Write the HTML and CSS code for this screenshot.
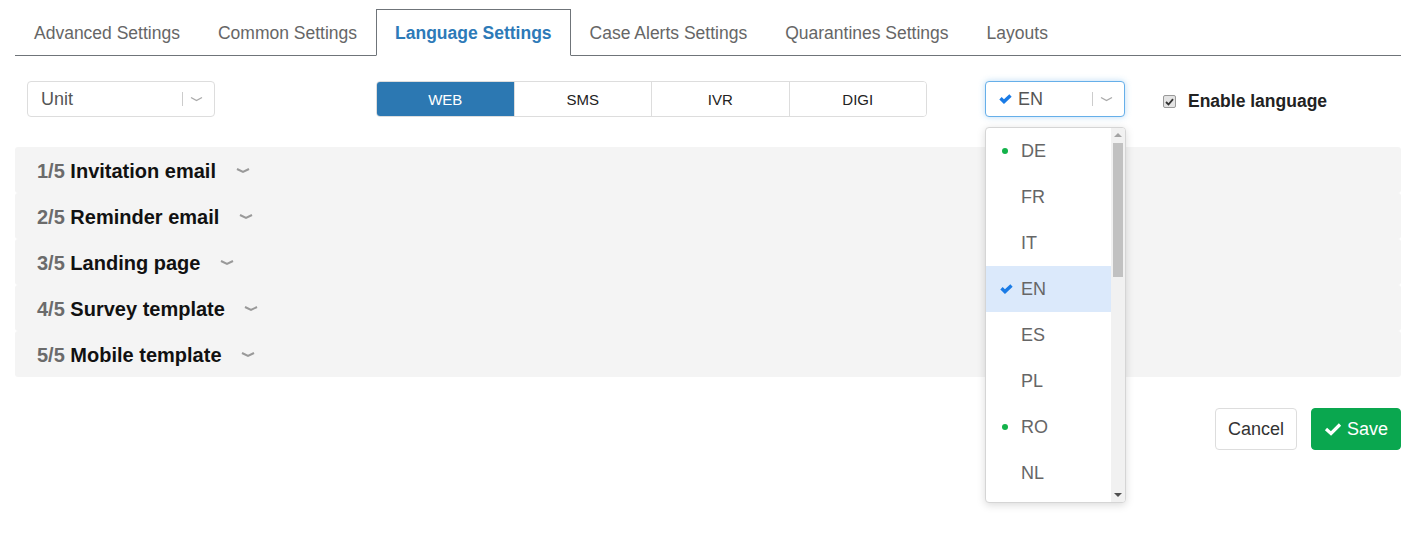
FILE: index.html
```html
<!DOCTYPE html>
<html lang="en">
<head>
    <meta charset="UTF-8">
    <title>Language Settings</title>
    <link rel="stylesheet" href="styles.css">
</head>
<body>
    <div class="page">
        <!-- Tabs -->
        <ul class="tabs">
            <li class="tab">Advanced Settings</li>
            <li class="tab">Common Settings</li>
            <li class="tab active">Language Settings</li>
            <li class="tab">Case Alerts Settings</li>
            <li class="tab">Quarantines Settings</li>
            <li class="tab">Layouts</li>
        </ul>

        <!-- Toolbar -->
        <div class="toolbar">
            <div class="select unit-select">
                <span class="select-value">Unit</span>
                <span class="select-sep"></span>
                <svg class="chev" width="13" height="8" viewBox="0 0 13 8"><path d="M1 2.5 L6.5 5.5 L12 2.5" fill="none" stroke="#aaa" stroke-width="1.4"/></svg>
            </div>

            <div class="channels">
                <button class="channel active">WEB</button>
                <button class="channel">SMS</button>
                <button class="channel">IVR</button>
                <button class="channel">DIGI</button>
            </div>

            <div class="lang-wrap">
                <div class="select lang-select">
                    <svg class="tick" width="13" height="10" viewBox="0 0 13 10"><path d="M1.5 4.2 L5 7.6 L11.5 1.5" fill="none" stroke="#1a7be6" stroke-width="3.4"/></svg>
                    <span class="select-value">EN</span>
                    <span class="select-sep"></span>
                    <svg class="chev" width="13" height="8" viewBox="0 0 13 8"><path d="M1 2.5 L6.5 5.5 L12 2.5" fill="none" stroke="#aaa" stroke-width="1.4"/></svg>
                </div>

                <div class="lang-menu">
                    <ul class="lang-list">
                        <li><span class="dot"></span>DE</li>
                        <li>FR</li>
                        <li>IT</li>
                        <li class="selected"><svg class="tick" width="13" height="10" viewBox="0 0 13 10"><path d="M1.5 4.2 L5 7.6 L11.5 1.5" fill="none" stroke="#1a7be6" stroke-width="3.4"/></svg>EN</li>
                        <li>ES</li>
                        <li>PL</li>
                        <li><span class="dot"></span>RO</li>
                        <li>NL</li>
                    </ul>
                    <div class="scrollbar">
                        <span class="arrow up"></span>
                        <span class="thumb"></span>
                        <span class="arrow down"></span>
                    </div>
                </div>
            </div>

            <label class="enable">
                <span class="checkbox">
                    <svg width="9" height="8" viewBox="0 0 9 8"><path d="M1 4 L3.5 6.5 L8 1.2" fill="none" stroke="#333" stroke-width="1.8"/></svg>
                </span>
                Enable language
            </label>
        </div>

        <!-- Sections -->
        <div class="sections">
            <div class="section"><span class="num">1/5</span> Invitation email <svg class="chev" width="14" height="8" viewBox="0 0 14 8"><path d="M1 2 L7 5 L13 2" fill="none" stroke="#999" stroke-width="2"/></svg></div>
            <div class="section"><span class="num">2/5</span> Reminder email <svg class="chev" width="14" height="8" viewBox="0 0 14 8"><path d="M1 2 L7 5 L13 2" fill="none" stroke="#999" stroke-width="2"/></svg></div>
            <div class="section"><span class="num">3/5</span> Landing page <svg class="chev" width="14" height="8" viewBox="0 0 14 8"><path d="M1 2 L7 5 L13 2" fill="none" stroke="#999" stroke-width="2"/></svg></div>
            <div class="section"><span class="num">4/5</span> Survey template <svg class="chev" width="14" height="8" viewBox="0 0 14 8"><path d="M1 2 L7 5 L13 2" fill="none" stroke="#999" stroke-width="2"/></svg></div>
            <div class="section"><span class="num">5/5</span> Mobile template <svg class="chev" width="14" height="8" viewBox="0 0 14 8"><path d="M1 2 L7 5 L13 2" fill="none" stroke="#999" stroke-width="2"/></svg></div>
        </div>

        <!-- Footer -->
        <div class="actions">
            <button class="btn cancel">Cancel</button>
            <button class="btn save">
                <svg width="18" height="14" viewBox="0 0 18 14"><path d="M2 7 L7 11.5 L16 2.5" fill="none" stroke="#fff" stroke-width="3.2"/></svg>
                Save
            </button>
        </div>
    </div>
</body>
</html>
```

FILE: styles.css
```css
/* General */
html, body {
    height: 100%;
}

body {
    margin: 0;
    font-family: "Liberation Sans", Arial, sans-serif;
    background: #fff;
    color: #333;
}

.page {
    padding: 9px 20px 0 15px;
}

/* Tabs */
.tabs {
    display: flex;
    list-style: none;
    margin: 0;
    padding: 0;
    border-bottom: 1px solid #6f7479;
}

.tab {
    font-size: 17.5px;
    color: #666;
    padding: 13px 18px 12px 18px;
    border: 1px solid transparent;
    margin-bottom: -1px;
    line-height: 20px;
}

.tab.active {
    color: #2d7ab8;
    font-weight: bold;
    background: #fff;
    border-color: #6f7479;
    border-bottom-color: #fff;
}

/* Toolbar */
.toolbar {
    display: flex;
    align-items: flex-start;
    margin-top: 25px;
    padding-left: 12px;
    height: 66px;
}

.select {
    display: flex;
    align-items: center;
    height: 34px;
    border: 1px solid #ddd;
    border-radius: 4px;
    background: #fff;
}

.select-value {
    flex: 1;
    font-size: 18px;
    color: #555;
}

.select-sep {
    width: 1px;
    height: 14px;
    background: #ccc;
    margin-right: 7px;
}

.select .chev {
    margin-right: 11px;
}

.unit-select {
    width: 186px;
}

.unit-select .select-value {
    padding-left: 13px;
}

.channels {
    display: flex;
    margin-left: 161px;
    border: 1px solid #ddd;
    border-radius: 4px;
    width: 549px;
    height: 34px;
    overflow: hidden;
}

.channel {
    flex: 1;
    border: none;
    border-left: 1px solid #ddd;
    background: #fff;
    font-family: inherit;
    font-size: 15px;
    color: #222;
    padding: 0;
}

.channel:first-child {
    border-left: none;
}

.channel.active {
    background: #2c78b2;
    color: #fff;
}

/* Language picker */
.lang-wrap {
    position: relative;
    margin-left: 58px;
}

.lang-select {
    width: 138px;
    border-color: #66afe9;
    box-shadow: 0 0 6px rgba(102, 175, 233, 0.45);
}

.lang-select .tick {
    margin: 0 6px 0 13px;
}

.lang-menu {
    position: absolute;
    top: 46px;
    left: 0;
    width: 139px;
    height: 374px;
    background: #fff;
    border: 1px solid #d5d5d5;
    border-radius: 4px;
    box-shadow: 0 2px 8px rgba(0, 0, 0, 0.15);
    display: flex;
    overflow: hidden;
    z-index: 10;
}

.lang-list {
    list-style: none;
    margin: 0;
    padding: 0;
    flex: 1;
}

.lang-list li {
    display: flex;
    align-items: center;
    height: 46px;
    padding-left: 35px;
    font-size: 18px;
    color: #666;
    position: relative;
}

.lang-list li.selected {
    background: #dbe9fb;
}

.lang-list .tick {
    position: absolute;
    left: 14px;
}

.lang-list .dot {
    position: absolute;
    left: 16px;
    width: 6px;
    height: 6px;
    border-radius: 50%;
    background: #13b24a;
}

.scrollbar {
    width: 14px;
    background: #f1f1f1;
    display: flex;
    flex-direction: column;
    align-items: center;
}

.scrollbar .thumb {
    width: 10px;
    height: 134px;
    background: #c1c1c1;
    margin-top: 1px;
}

.scrollbar .arrow {
    width: 0;
    height: 0;
    border-left: 4px solid transparent;
    border-right: 4px solid transparent;
    margin: 5px 0;
}

.scrollbar .arrow.up {
    border-bottom: 4px solid #a3a3a3;
}

.scrollbar .arrow.down {
    border-top: 4px solid #505050;
    margin-top: auto;
}

/* Enable checkbox */
.enable {
    display: flex;
    align-items: center;
    margin-left: 38px;
    margin-top: 10px;
    font-size: 17.5px;
    font-weight: bold;
    color: #222;
}

.checkbox {
    display: flex;
    align-items: center;
    justify-content: center;
    width: 11px;
    height: 11px;
    border: 1px solid #999;
    border-radius: 2px;
    background: #e4e4e4;
    margin-right: 12px;
}

/* Sections */
.sections {
    display: flex;
    flex-direction: column;
}

.section {
    display: flex;
    align-items: center;
    height: 46px;
    box-sizing: border-box;
    padding: 2px 0 0 22px;
    background: #f4f4f4;
    font-size: 20px;
    font-weight: bold;
    color: #111;
    border-radius: 3px;
    white-space: pre;
}

.section .num {
    color: #6b6b6b;
}

.section .chev {
    margin-left: 14px;
}

/* Footer buttons */
.actions {
    display: flex;
    justify-content: flex-end;
    gap: 14px;
    margin-top: 31px;
}

.btn {
    height: 42px;
    border-radius: 4px;
    font-family: inherit;
    font-size: 18px;
    padding: 0 12px;
    display: flex;
    align-items: center;
    gap: 5px;
}

.cancel {
    background: #fff;
    border: 1px solid #ddd;
    color: #333;
}

.save {
    background: #0aa74f;
    border: 1px solid #0aa74f;
    color: #fff;
}
```
